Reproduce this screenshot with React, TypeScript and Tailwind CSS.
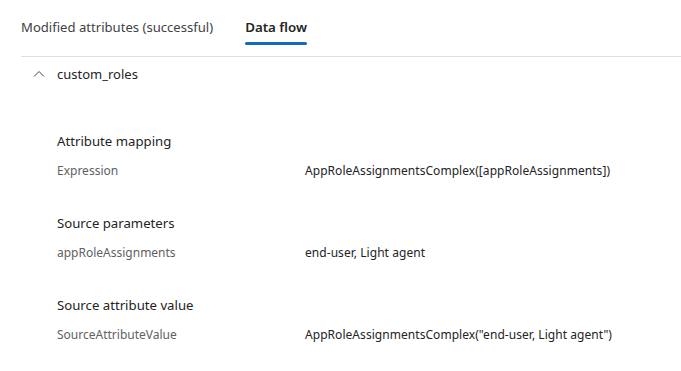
import React from "react";

const font = { fontFamily: "'Noto Sans', 'Open Sans', sans-serif" };

function Section({ title, label, value, first }: { title: string; label: string; value: string; first?: boolean }) {
  return (
    <div className={first ? "" : "mt-[32px]"}>
      <div className="h-[20px] leading-[20px] text-[13.2px] text-[#242424]">{title}</div>
      <div className="mt-[10px] flex h-[20px] leading-[20px] text-[12px]">
        <div className="w-[248px] text-[#616161]">{label}</div>
        <div className="text-[#242424] tracking-[0.05px]">{value}</div>
      </div>
    </div>
  );
}

export default function App() {
  return (
    <div className="w-[681px] h-[371px] bg-white" style={font}>
      <div className="pl-[21px]">
        <div className="flex h-[57px] border-b border-[#e0e0e0] items-start">
          <div className="pt-[17px] text-[13.1px] leading-[20px] text-[#424242]">Modified attributes (successful)</div>
          <div className="ml-[32px] flex flex-col">
            <div className="pt-[17px] text-[13.3px] leading-[20px] font-semibold text-[#242424]">Data flow</div>
            <div className="mt-[5px] h-[3px] bg-[#0f6cbd] rounded-full" />
          </div>
        </div>
      </div>
      <div className="pl-[33px] pt-[7px] flex items-center h-[27px]">
        <svg width="12" height="12" viewBox="0 0 12 12" className="text-[#424242]">
          <path d="M1 8.5 L6 3.5 L11 8.5" fill="none" stroke="currentColor" strokeWidth="1" />
        </svg>
        <span className="ml-[12px] text-[13px] leading-[20px] text-[#242424]">custom_roles</span>
      </div>
      <div className="pl-[57px] mt-[47px]">
        <Section first title="Attribute mapping" label="Expression" value="AppRoleAssignmentsComplex([appRoleAssignments])" />
        <Section title="Source parameters" label="appRoleAssignments" value="end-user, Light agent" />
        <Section title="Source attribute value" label="SourceAttributeValue" value={'AppRoleAssignmentsComplex("end-user, Light agent")'} />
      </div>
    </div>
  );
}
